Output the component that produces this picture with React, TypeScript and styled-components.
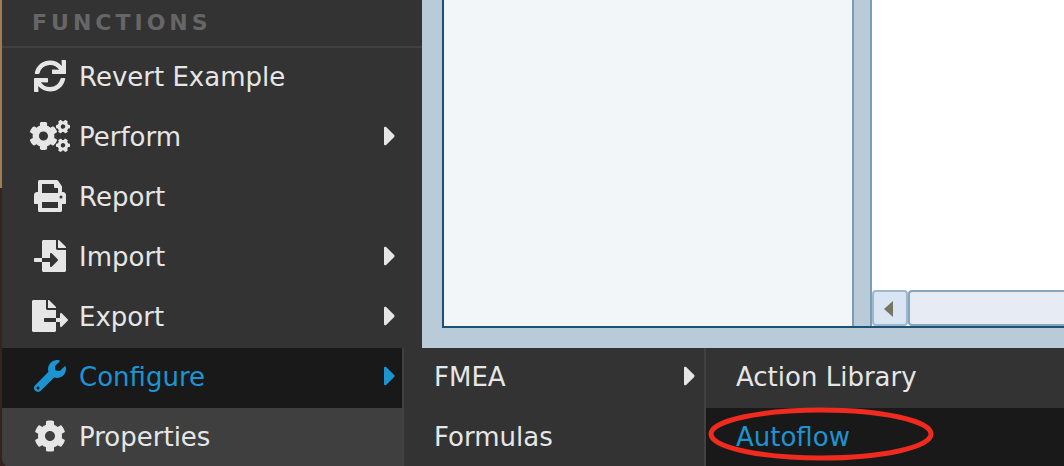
import React from "react";
import styled, { createGlobalStyle, css } from "styled-components";
import {
  FaCaretRight,
  FaCog,
  FaCogs,
  FaFileExport,
  FaFileImport,
  FaSync,
  FaWrench,
} from "react-icons/fa";

const color = {
  menu: "#333333",
  menuActive: "#191919",
  menuHover: "#3f3f3f",
  line: "#414141",
  heading: "#666666",
  text: "#e6e6e6",
  accent: "#1c94d2",
  frame: "#b9cad9",
  frameDark: "#1c5278",
  splitter: "#7c9db8",
};

const GlobalStyle = createGlobalStyle`
  * { box-sizing: border-box; }
  body {
    margin: 0;
    overflow: hidden;
    font-family: Verdana, "DejaVu Sans", sans-serif;
  }
`;

const Page = styled.div`
  display: flex;
  height: 100vh;
  overflow: hidden;
  background: linear-gradient(#a37c54 0, #a37c54 188px, #35231f 188px);
  padding-left: 2px;
`;

const Sidebar = styled.nav`
  position: relative;
  z-index: 1;
  flex: 0 0 420px;
  align-self: flex-start;
  background: ${color.menu};
  border-bottom-left-radius: 10px;
`;

const Heading = styled.h2`
  height: 48px;
  margin: 0;
  padding-left: 30px;
  border-bottom: 2px solid ${color.line};
  color: ${color.heading};
  font-size: 22px;
  line-height: 46px;
  letter-spacing: 4px;
`;

const MenuList = styled.ul`
  margin: 0;
  padding: 0;
  list-style: none;
`;

const MenuItem = styled.li<{ $open?: boolean }>`
  position: relative;
  ${(p) =>
    p.$open &&
    css`
      z-index: 1;
      margin-right: 20px;
    `}
`;

type RowState = "normal" | "active" | "hover";

const MenuButton = styled.button<{ $state: RowState; $sub?: boolean; $inset?: boolean }>`
  display: flex;
  align-items: center;
  width: 100%;
  height: 60px;
  border: 0;
  border-bottom-left-radius: ${(p) => (p.$state === "hover" ? "10px" : "0")};
  padding: 0 ${(p) => (p.$inset ? "26px" : p.$sub ? "8px" : "6px")} 4px
    ${(p) => (p.$sub ? "30px" : "26px")};
  background: ${(p) =>
    p.$state === "active" ? color.menuActive : p.$state === "hover" ? color.menuHover : color.menu};
  color: ${(p) => (p.$state === "active" ? color.accent : color.text)};
  font: inherit;
  font-size: 26px;
  line-height: 32px;
  text-align: left;
  white-space: nowrap;
`;

const IconSlot = styled.span`
  display: flex;
  width: 44px;
  margin-right: 7px;

  svg {
    width: 44px;
    height: 32px;
  }
`;

const Label = styled.span`
  flex: 1;
  padding-top: 2px;
`;

const Caret = styled(FaCaretRight)`
  width: 12px;
  height: 32px;
`;

const Flyout = styled(MenuList)<{ $width: number }>`
  position: absolute;
  top: 0;
  left: 100%;
  width: ${(p) => p.$width}px;
  border-left: 2px solid ${color.line};
  background: ${color.menu};
`;

const Marker = styled.svg`
  position: absolute;
  top: -3px;
  left: 0;
  pointer-events: none;
`;

const Workspace = styled.main`
  flex: 1;
  min-width: 0;
  padding: 0 0 138px 20px;
  background: ${color.frame};
`;

const Panes = styled.div`
  display: flex;
  height: 100%;
  border: solid ${color.frameDark};
  border-width: 0 0 2px 2px;
`;

const TreePane = styled.section`
  flex: 0 0 408px;
  background: #f2f6f9;
`;

const Splitter = styled.div`
  flex: 0 0 20px;
  border: solid ${color.splitter};
  border-width: 0 2px;
`;

const DocumentPane = styled.section`
  display: flex;
  flex: 1;
  flex-direction: column;
  justify-content: flex-end;
  min-width: 0;
  overflow: hidden;
  background: #ffffff;
`;

const ScrollBar = styled.div`
  display: flex;
  height: 36px;
`;

const ScrollButton = styled.button`
  display: flex;
  align-items: center;
  justify-content: center;
  flex: 0 0 36px;
  padding: 2px 4px 0 0;
  border: 2px solid #a0b8ce;
  border-radius: 4px;
  background: #dae5f3;
`;

const ScrollThumb = styled.div`
  flex: 1;
  border: 2px solid #88a7bd;
  border-right: 0;
  border-radius: 4px 0 0 4px;
  background: #e7ecf4;
`;

const PrinterIcon = () => (
  <svg viewBox="0 0 512 512" fill="currentColor" fillRule="evenodd" aria-hidden="true">
    <path d="M464 192h-16v-82a24 24 0 0 0-7-17L383 7a24 24 0 0 0-17-7H88a24 24 0 0 0-24 24v168H48c-26.500 0-48 21.500-48 48v132a12 12 0 0 0 12 12h52v104a24 24 0 0 0 24 24h336a24 24 0 0 0 24-24V384h52a12 12 0 0 0 12-12V240c0-26.500-21.500-48-48-48zM384 448H128v-96h256v96zM384 208H128V64h192v48a16 16 0 0 0 16 16h48v80zM432 296a24 24 0 1 1 0-48 24 24 0 0 1 0 48z" />
  </svg>
);

interface Entry {
  label: string;
  icon: React.ComponentType;
  state?: RowState;
  opens?: boolean;
}

const entries: Entry[] = [
  { label: "Revert Example", icon: FaSync },
  { label: "Perform", icon: FaCogs, opens: true },
  { label: "Report", icon: PrinterIcon },
  { label: "Import", icon: FaFileImport, opens: true },
  { label: "Export", icon: FaFileExport, opens: true },
  { label: "Configure", icon: FaWrench, opens: true, state: "active" },
  { label: "Properties", icon: FaCog, state: "hover" },
];

const ConfigureMenu = () => (
  <Flyout $width={302}>
    <MenuItem>
      <MenuButton $state="normal" $sub aria-haspopup="true">
        <Label>FMEA</Label>
        <Caret />
      </MenuButton>
      <Flyout $width={402}>
        <MenuItem>
          <MenuButton $state="normal" $sub>
            <Label>Action Library</Label>
          </MenuButton>
        </MenuItem>
        <MenuItem>
          <MenuButton $state="active" $sub>
            <Label>Autoflow</Label>
          </MenuButton>
          <Marker width="230" height="60" aria-hidden="true">
            <ellipse cx="115" cy="29" rx="110" ry="24" fill="none" stroke="#ee2b1e" strokeWidth="5" />
          </Marker>
        </MenuItem>
      </Flyout>
    </MenuItem>
    <MenuItem>
      <MenuButton $state="normal" $sub>
        <Label>Formulas</Label>
      </MenuButton>
    </MenuItem>
  </Flyout>
);

export default function App() {
  return (
    <>
      <GlobalStyle />
      <Page>
        <Sidebar aria-label="Functions">
          <Heading>FUNCTIONS</Heading>
          <MenuList>
            {entries.map(({ label, icon: Icon, state = "normal", opens }) => {
              const open = state === "active";
              return (
                <MenuItem key={label} $open={open}>
                  <MenuButton $state={state} $inset={!open} aria-haspopup={opens}>
                    <IconSlot>
                      <Icon />
                    </IconSlot>
                    <Label>{label}</Label>
                    {opens && <Caret />}
                  </MenuButton>
                  {open && <ConfigureMenu />}
                </MenuItem>
              );
            })}
          </MenuList>
        </Sidebar>
        <Workspace>
          <Panes>
            <TreePane />
            <Splitter />
            <DocumentPane>
              <ScrollBar>
                <ScrollButton aria-label="Scroll left">
                  <svg width="9" height="16" viewBox="0 0 9 16" aria-hidden="true">
                    <path d="M9 0v16L0 8z" fill="#74765f" />
                  </svg>
                </ScrollButton>
                <ScrollThumb />
              </ScrollBar>
            </DocumentPane>
          </Panes>
        </Workspace>
      </Page>
    </>
  );
}
